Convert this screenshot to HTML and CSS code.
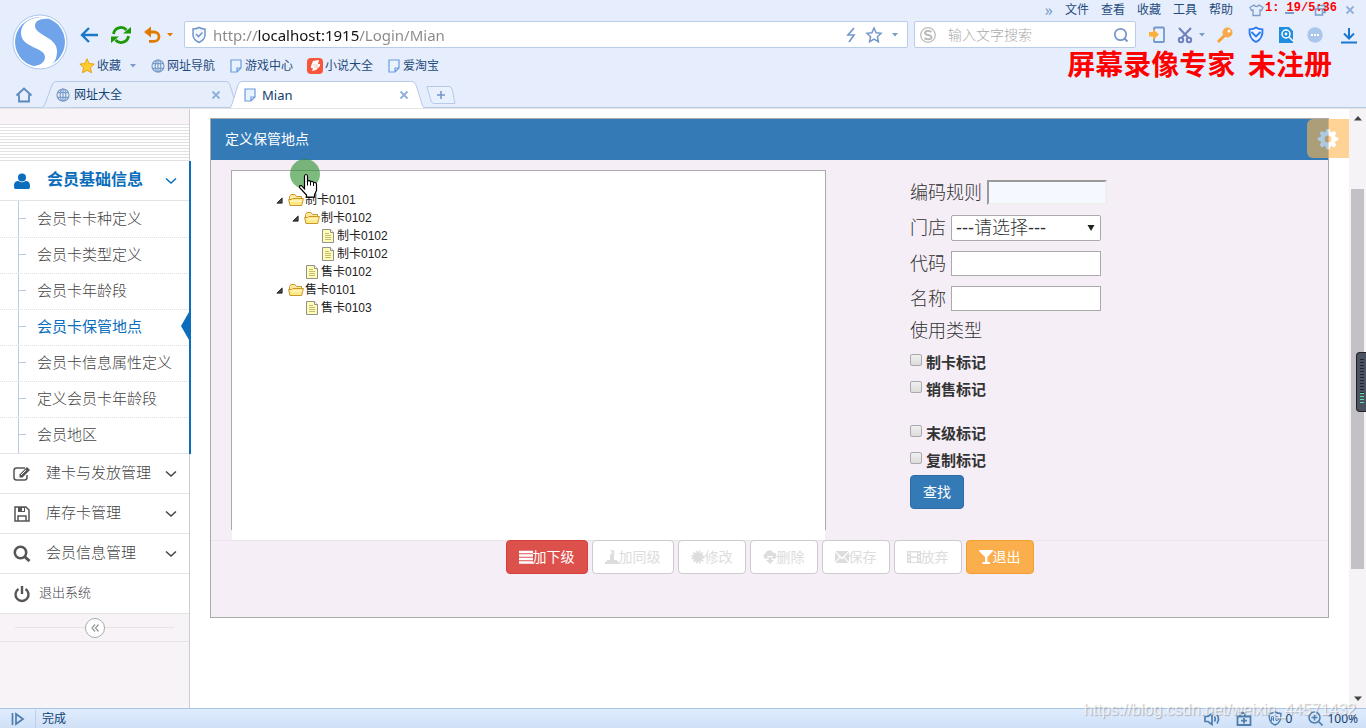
FILE: index.html
```html
<!DOCTYPE html>
<html lang="zh-CN">
<head>
<meta charset="utf-8">
<title>Mian</title>
<link rel="stylesheet" href="styles.css">
</head>
<body>
<svg class="defs" aria-hidden="true">
  <symbol id="globe" viewBox="0 0 14 14"><g fill="none" stroke="#7b9cc8" stroke-width="1.2"><circle cx="7" cy="7" r="6"/><ellipse cx="7" cy="7" rx="2.8" ry="6"/><path d="M7 1v12M1.6 4.6h10.8M1.6 9.4h10.8"/></g></symbol>
  <symbol id="page" viewBox="0 0 14 14"><path d="M2 1h10v8l-4 4H2zM12 9H8v4" fill="#e9f2ff" stroke="#6d9bdc" stroke-width="1.2"/></symbol>
  <symbol id="close" viewBox="0 0 10 10"><path d="M1.500 1.500l7 7M8.500 1.500l-7 7" stroke="#8faedb" stroke-width="1.800"/></symbol>
  <symbol id="down" viewBox="0 0 8 6"><path d="M1 1h6L4 4.500z" fill="currentColor"/></symbol>
  <symbol id="chev" viewBox="0 0 12 8"><path d="M1 1.500l5 4.500 5-4.500" fill="none" stroke="currentColor" stroke-width="1.500"/></symbol>
  <symbol id="folder" viewBox="0 0 16 16"><path d="M1.500 12.500V4.500L3 2.500h4l1.500 2h5v3" fill="#ffe9a0" stroke="#c9972c"/><path d="M2 13.500L.6 7.500h3.200l1-1h10.600l-1.700 7z" fill="#ffe985" stroke="#c9972c"/><path d="M2.500 9h11.500" stroke="#fffbe0"/></symbol>
  <symbol id="leaf" viewBox="0 0 16 16"><path d="M2.500 1.500h8l3 3v10h-11z" fill="#fffcb8" stroke="#92928c"/><path d="M10.500 1.500v3h3" fill="#fff" stroke="#92928c"/><path d="M5 5.500h4M5 7.500h6M5 9.500h6M5 11.500h6" stroke="#b3ab62" stroke-width=".8"/></symbol>
  <symbol id="open" viewBox="0 0 8 8"><path d="M7 1v6H1z" fill="#444" stroke="#222"/></symbol>
</svg>

<header class="chrome">
  <div class="top">
    <svg class="logo" viewBox="0 0 56 56"><circle cx="28" cy="28" r="27" fill="#fff" stroke="#a9c6ee"/><circle cx="28" cy="28" r="25" fill="#6fa4ea"/><path d="M33 3C18 3 9 9 9 19c0 15 24 14 24 24 0 5-5 9-12 9l7 2c13 0 17-8 17-17 0-14-22-16-22-25 0-5 5-8 14-7z" fill="#fff"/></svg>
    <div class="bars">
      <nav class="menu">
        <span class="more">»</span>
        <a href="#">文件</a><a href="#">查看</a><a href="#">收藏</a><a href="#">工具</a><a href="#">帮助</a>
        <div class="window">
          <svg width="15" height="14" viewBox="0 0 15 14"><path d="M5 2L1 4.500 2.500 7.500 4 7v5.500h7V7l1.500.5L14 4.500 10 2C9 4 6 4 5 2z" fill="none" stroke="#7b9cc8" stroke-width="1.300"/></svg>
          <svg width="12" height="12" viewBox="0 0 12 12"><path d="M2 9h9" stroke="#7b9cc8" stroke-width="2"/></svg>
          <svg width="12" height="12" viewBox="0 0 12 12"><path d="M1.500 5h7v6h-7zM4 4.500v-3h7v7H9" fill="none" stroke="#7b9cc8" stroke-width="1.500"/></svg>
          <svg width="10" height="10"><use href="#close"/></svg>
          <span class="timer">1: 19/5:36</span>
        </div>
      </nav>
      <div class="address">
        <button class="ib" aria-label="后退"><svg width="20" height="18" viewBox="0 0 20 18"><path d="M10 2L3 9l7 7M3 9h16" fill="none" stroke="#1b77c9" stroke-width="2.400"/></svg></button>
        <button class="ib" aria-label="刷新"><svg width="22" height="20" viewBox="0 0 22 20"><path d="M3.500 9A7.500 7.500 0 0 1 16.500 5M18.500 11A7.500 7.500 0 0 1 5.500 15" fill="none" stroke="#1c9a06" stroke-width="2.800"/><path d="M13 8.500h8V2zM9 11.500H1V18z" fill="#1c9a06"/></svg></button>
        <button class="ib undo" aria-label="恢复"><svg width="19" height="18" viewBox="0 0 19 18"><path d="M3 6h8a5 4.700 0 0 1 0 9.400H6" fill="none" stroke="#e07b00" stroke-width="2.800"/><path d="M1 6l7-5.500v11z" fill="#e07b00"/></svg><svg width="8" height="6"><use href="#down"/></svg></button>
        <div class="field url">
          <svg width="16" height="18" viewBox="0 0 16 18"><path d="M8 1.500c2 1.200 4 1.500 6 1.500v6c0 4-3 6-6 7.500C5 15 2 13 2 9V3c2 0 4-.3 6-1.500z" fill="#f2f7ff" stroke="#7598ca" stroke-width="1.500"/><path d="M5 8l2.500 2.500L11.500 6.500" fill="none" stroke="#7598ca" stroke-width="1.600"/></svg>
          <input type="text" aria-label="地址" value="http://localhost:1915/Login/Mian">
          <svg width="12" height="18" viewBox="0 0 12 18"><path d="M9 2L3 9h6L4 16" fill="none" stroke="#7598ca" stroke-width="1.700"/></svg>
          <svg width="18" height="18" viewBox="0 0 18 18"><path d="M9 2l2.100 4.700 5 .6-3.700 3.400 1 5L9 13.200 4.600 15.700l1-5L1.900 7.300l5-.6z" fill="none" stroke="#7598ca" stroke-width="1.500"/></svg>
          <svg width="8" height="6" class="dd"><use href="#down"/></svg>
        </div>
        <div class="field search">
          <svg width="18" height="18" viewBox="0 0 18 18"><circle cx="9" cy="9" r="7.300" fill="none" stroke="#bbb" stroke-width="1.300"/><path d="M12.500 5.800C10 4.500 6 4.700 6 7c0 2.500 6.500 1.500 6.500 4.200 0 2.500-4.500 2.500-7 1" fill="none" stroke="#bbb" stroke-width="2"/></svg>
          <input type="text" aria-label="搜索" placeholder="输入文字搜索">
          <svg width="16" height="16" viewBox="0 0 16 16"><circle cx="7.500" cy="7.500" r="5.700" fill="none" stroke="#7598ca" stroke-width="1.700"/><path d="M11 11l3.500 3.500" stroke="#7598ca" stroke-width="2"/></svg>
        </div>
        <div class="tools">
          <svg width="18" height="18" viewBox="0 0 18 18"><rect x="6" y="1.500" width="10" height="14.500" rx="1" fill="#e9f2ff" stroke="#7598ca" stroke-width="1.800"/><path d="M1 6h4V3l6 5.500L5 14v-3.500H1z" fill="#fbb03b"/></svg>
          <span class="pair"><svg width="16" height="18" viewBox="0 0 16 18"><g fill="none" stroke="#7080bd" stroke-width="2"><path d="M2 2l9.500 10M14 2L4.500 12"/><circle cx="4" cy="14" r="2.200"/><circle cx="12" cy="14" r="2.200"/></g></svg><svg width="8" height="6" class="dd"><use href="#down"/></svg></span>
          <svg width="18" height="18" viewBox="0 0 18 18"><path d="M9 9l-7 7" stroke="#f6a13a" stroke-width="3"/><circle cx="11.500" cy="6.500" r="5" fill="#f9a94b"/><circle cx="13" cy="5" r="1.500" fill="#fff"/></svg>
          <svg width="18" height="18" viewBox="0 0 18 18"><path d="M9 1.500c2 1.500 4 1.800 6.500 1.800C16 9 14 13.500 9 16 4 13.500 2 9 2.500 3.300 5 3.300 7 3 9 1.500z" fill="#eef4ff" stroke="#2b78f0" stroke-width="1.800"/><path d="M4.500 6L9 10.500 13.500 6" fill="none" stroke="#2b78f0" stroke-width="1.800"/></svg>
          <svg width="16" height="18" viewBox="0 0 16 18"><path d="M1 1h10l4 4v12H1z" fill="#1e8fe0"/><circle cx="8" cy="8" r="4" fill="none" stroke="#fff" stroke-width="1.500"/><circle cx="8" cy="8" r="1.400" fill="#fff"/><path d="M11 11l4 4" stroke="#fff" stroke-width="1.500"/></svg>
          <svg width="16" height="16" viewBox="0 0 16 16"><circle cx="8" cy="8" r="7.700" fill="#abc6eb"/><path d="M4 7h2v2H4zM7 7h2v2H7zM10 7h2v2h-2z" fill="#fff"/></svg>
          <svg width="18" height="18" viewBox="0 0 18 18"><path d="M9 2v10M4 7.500l5 5 5-5M1 16.500h16" fill="none" stroke="#1b77c9" stroke-width="2"/></svg>
        </div>
      </div>
      <div class="marks">
        <a href="#"><svg width="16" height="16" viewBox="0 0 16 16"><path d="M8 .8l2.200 4.700 5 .6-3.700 3.500 1 5.200L8 12.300l-4.500 2.500 1-5.200L.8 6.100l5-.6z" fill="#ffcb2e" stroke="#e5a31a"/></svg>收藏<svg width="8" height="6" class="dd"><use href="#down"/></svg></a>
        <a href="#"><svg width="14" height="14"><use href="#globe"/></svg>网址导航</a>
        <a href="#"><svg width="14" height="14"><use href="#page"/></svg>游戏中心</a>
        <a href="#" class="novel"><svg width="16" height="16" viewBox="0 0 16 16"><rect width="16" height="16" rx="4" fill="#f8563c"/><path d="M6 3l6-1-1 4h2v2l-4 4-4 1 1-3H4V8z" fill="#fff"/><path d="M6 7h5M7 9h4" stroke="#f8b0a4" stroke-width=".8"/></svg>小说大全</a>
        <a href="#"><svg width="14" height="14"><use href="#page"/></svg>爱淘宝</a>
      </div>
      <strong class="notice">屏幕录像专家&nbsp;&nbsp;未注册</strong>
    </div>
  </div>
  <div class="tabs">
    <svg class="home" width="18" height="16" viewBox="0 0 18 16"><path d="M1.500 8.500L9 1.500l7.500 7M4 7.500v7h10v-7" fill="none" stroke="#5c88c0" stroke-width="1.800"/></svg>
    <div class="tab">
      <svg class="shape" viewBox="0 0 194 27" preserveAspectRatio="none"><path d="M0 26.500Q2 26 3 23L10 4Q11 .5 14 .5H184Q187 .5 188 4L194 24" fill="#e6eefc" stroke="#b4cae8"/></svg>
      <svg width="14" height="14"><use href="#globe"/></svg><span>网址大全</span><button aria-label="关闭"><svg width="10" height="10"><use href="#close"/></svg></button>
    </div>
    <div class="tab on">
      <svg class="shape" viewBox="0 0 194 27" preserveAspectRatio="none"><path d="M0 27Q1 26 2 23L8 4Q9 .5 12 .5H182Q185 .5 186 4L192 23Q193 26 194 27" fill="#fff" stroke="#b4cae8"/></svg>
      <svg width="14" height="14"><use href="#page"/></svg><span>Mian</span><button aria-label="关闭"><svg width="10" height="10"><use href="#close"/></svg></button>
    </div>
    <button class="plus" aria-label="新标签"><svg width="30" height="18" viewBox="0 0 30 18"><path d="M1 .5h22q2 0 3 2.500l3 14.500H8Q6 17.500 5 15z" fill="#e9f1ff" stroke="#b4cae8"/><path d="M15 5v8M11 9h8" stroke="#7598ca" stroke-width="1.600"/></svg></button>
  </div>
</header>

<div class="view">
  <aside class="side">
    <div class="stripes"></div>
    <section class="group">
      <a class="item head" href="#"><svg width="16" height="16" viewBox="0 0 16 16"><circle cx="8" cy="4.500" r="4" fill="#0a6ebd"/><path d="M1 16q-1 0-1-3c0-4 2-5 4.500-5 2 1.600 5 1.600 7 0C14 8 16 9 16 13q0 3-1 3z" fill="#0a6ebd"/></svg><span>会员基础信息</span><svg width="12" height="8"><use href="#chev"/></svg></a>
      <ul class="sub">
        <li><a href="#">会员卡卡种定义</a></li>
        <li><a href="#">会员卡类型定义</a></li>
        <li><a href="#">会员卡年龄段</a></li>
        <li class="cur"><a href="#">会员卡保管地点</a></li>
        <li><a href="#">会员卡信息属性定义</a></li>
        <li><a href="#">定义会员卡年龄段</a></li>
        <li><a href="#">会员地区</a></li>
      </ul>
    </section>
    <a class="item" href="#"><svg width="18" height="16" viewBox="0 0 18 16"><path d="M12 2H3.500Q1 2 1 4.500v7Q1 14 3.500 14h8q2.500 0 2.500-2.500V9" fill="none" stroke="#555" stroke-width="1.500"/><path d="M6.500 11.500V8.500L14 1l3 3-7.500 7.500z" fill="#555"/><path d="M8 9l5-5" stroke="#fff"/></svg><span>建卡与发放管理</span><svg width="12" height="8"><use href="#chev"/></svg></a>
    <a class="item" href="#"><svg width="18" height="16" viewBox="0 0 18 16"><path d="M2 1h11l3 3v11H2z" fill="none" stroke="#555" stroke-width="1.500"/><path d="M5 15v-5h8v5" fill="none" stroke="#555" stroke-width="1.500"/><path d="M5 1h7v5H5z" fill="#555"/><path d="M9 2h2v3H9z" fill="#fff"/></svg><span>库存卡管理</span><svg width="12" height="8"><use href="#chev"/></svg></a>
    <a class="item" href="#"><svg width="18" height="17" viewBox="0 0 18 17"><circle cx="7.500" cy="7.500" r="5.700" fill="none" stroke="#555" stroke-width="2.500"/><path d="M11.500 11.500l5 4.500" stroke="#555" stroke-width="3"/></svg><span>会员信息管理</span><svg width="12" height="8"><use href="#chev"/></svg></a>
    <a class="item exit" href="#"><svg width="18" height="18" viewBox="0 0 18 18"><path d="M5.500 4A6.500 6.500 0 1 0 12.500 4" fill="none" stroke="#555" stroke-width="2.400"/><path d="M9 1v8" stroke="#555" stroke-width="2.400"/></svg><span>退出系统</span></a>
    <div class="fold"><button aria-label="收起"><svg width="8" height="8" viewBox="0 0 8 8"><path d="M4 .5L1 4l3 3.500M7.500.5l-3 3.500 3 3.500" fill="none" stroke="#999" stroke-width="1.300"/></svg></button></div>
  </aside>

  <main class="main">
    <section class="panel">
      <h1>定义保管地点</h1>
      <div class="body">
        <div class="treewrap">
          <ul class="tree">
            <li><div><i><svg width="7" height="7"><use href="#open"/></svg></i><svg width="16" height="16"><use href="#folder"/></svg>制卡0101</div>
              <ul>
                <li><div><i><svg width="7" height="7"><use href="#open"/></svg></i><svg width="16" height="16"><use href="#folder"/></svg>制卡0102</div>
                  <ul>
                    <li><div><i></i><svg width="16" height="16"><use href="#leaf"/></svg>制卡0102</div></li>
                    <li><div><i></i><svg width="16" height="16"><use href="#leaf"/></svg>制卡0102</div></li>
                  </ul>
                </li>
                <li><div><i></i><svg width="16" height="16"><use href="#leaf"/></svg>售卡0102</div></li>
              </ul>
            </li>
            <li><div><i><svg width="7" height="7"><use href="#open"/></svg></i><svg width="16" height="16"><use href="#folder"/></svg>售卡0101</div>
              <ul>
                <li><div><i></i><svg width="16" height="16"><use href="#leaf"/></svg>售卡0103</div></li>
              </ul>
            </li>
          </ul>
        </div>
        <form class="form">
          <div class="row"><label for="rule">编码规则</label><input id="rule" class="rule" type="text"></div>
          <div class="row"><label for="shop">门店</label><span class="pick"><select id="shop"><option>---请选择---</option></select><svg width="8" height="8" viewBox="0 0 8 8"><path d="M.5 1h7L4 7z" fill="#222"/></svg></span></div>
          <div class="row"><label for="code">代码</label><input id="code" type="text"></div>
          <div class="row"><label for="name">名称</label><input id="name" type="text"></div>
          <p>使用类型</p>
          <div class="checks">
            <label><input type="checkbox">制卡标记</label>
            <label><input type="checkbox">销售标记</label>
          </div>
          <div class="checks">
            <label><input type="checkbox">末级标记</label>
            <label><input type="checkbox">复制标记</label>
          </div>
          <button class="btn primary" type="button">查找</button>
        </form>
      </div>
      <div class="actions">
        <button class="btn danger"><svg width="14" height="14" viewBox="0 0 14 14"><path d="M0 2h14M0 5.500h14M0 9h14M0 12.500h14" stroke="currentColor" stroke-width="2.300"/></svg>加下级</button>
        <button class="btn" disabled><svg width="14" height="14" viewBox="0 0 14 14"><path d="M5 0h3.500L9.500 2 8.500 4.500H9.500L9 6v4h3v1.500h2V14H0v-2.500h2V10h3V6l-.5-1.500H6L7 2z" fill="currentColor"/></svg>加同级</button>
        <button class="btn" disabled><svg width="14" height="14" viewBox="0 0 14 14"><circle cx="7" cy="7" r="4.800" fill="currentColor"/><circle cx="7" cy="7" r="5.500" fill="none" stroke="currentColor" stroke-width="2.200" stroke-dasharray="1.700 1.180"/></svg>修改</button>
        <button class="btn" disabled><svg width="14" height="14" viewBox="0 0 14 14"><path d="M3 9a3 3 0 0 1-.5-5.800A4 4 0 0 1 10 2.500 3.300 3.300 0 0 1 11 9H9.500V6h-5v3z" fill="currentColor"/><path d="M5.500 7h3v3H11l-4 4-4-4h2.500z" fill="currentColor"/></svg>删除</button>
        <button class="btn" disabled><svg width="14" height="14" viewBox="0 0 14 14"><path d="M.5 1h13L7 7.500zM0 2l4.500 5L0 12zM14 2v10L9.500 7zM5.300 7.800L7 9.500l1.700-1.700L13.500 13H.5z" fill="currentColor"/></svg>保存</button>
        <button class="btn" disabled><svg width="14" height="14" viewBox="0 0 14 14"><path d="M0 1h14v12H0zM1.200 2.500v1.500h1.500V2.500zm0 3.500v1.500h1.500V6zm0 3.500V11h1.500V9.500zM4 2.500v4h6v-4zM4 8v4h6V8zm7.300-5.500v1.500h1.500V2.500zm0 3.500v1.500h1.500V6zm0 3.500V11h1.500V9.500z" fill="currentColor" fill-rule="evenodd"/></svg>放弃</button>
        <button class="btn warn"><svg width="14" height="14" viewBox="0 0 14 14"><path d="M0 0h14v1L8.500 7v5h2.500v2H3.500v-2H6V7L0 1z" fill="currentColor"/></svg>退出</button>
      </div>
    </section>
    <button class="gear" aria-label="设置"><svg width="22" height="22" viewBox="0 0 22 22"><g fill="currentColor" fill-rule="evenodd"><path d="M9.300 1h3.400l.5 2.700 1.600.7 2.300-1.600 2.400 2.400-1.600 2.300.7 1.600 2.600.5v3l-2.600.5-.7 1.600 1.600 2.400-2.400 2.400-2.300-1.600-1.600.7-.5 2.600H9.300l-.5-2.600-1.600-.7-2.300 1.600-2.400-2.400 1.600-2.400-.7-1.600L.8 12.600v-3l2.600-.5.7-1.600-1.600-2.300 2.400-2.400 2.300 1.600 1.600-.7zM11 7.500a3.500 3.500 0 1 0 0 7 3.500 3.500 0 0 0 0-7z"/></g></svg></button>
    <svg class="pointer" width="30" height="40" viewBox="0 0 30 40"><circle cx="15" cy="15" r="15" fill="#258c28" fill-opacity=".6"/><path d="M14.500 17.500q0-2 1.500-2t1.500 2V22q2.500-1 3 .8 2.500-1 3 .8 3-.5 3 2v6l-2 4v2.500h-8v-2L9.500 28.500q-.5-2.500 2-1.800l3 3z" fill="#fff" stroke="#000" stroke-width="1.200"/><path d="M17.500 22v4.500M20.500 23v3.500M23.500 24v3" stroke="#000"/></svg>
  </main>

  <div class="scroll">
    <svg width="8" height="5" viewBox="0 0 8 5"><path d="M4 0l4 4.500H0z" fill="#444"/></svg>
    <div class="track"><div class="thumb"></div></div>
    <svg width="8" height="5" viewBox="0 0 8 5"><path d="M0 .5h8L4 5z" fill="#444"/></svg>
    <div class="meter"></div>
  </div>
</div>

<footer class="status">
  <svg width="14" height="14" viewBox="0 0 14 14"><path d="M1.500 1v12M5 2v10l7-5z" fill="none" stroke="#4f7ead" stroke-width="1.700"/></svg>
  <span class="done">完成</span>
  <svg width="16" height="14" viewBox="0 0 16 14"><path d="M1 4.500h3l4-3v11l-4-3H1zM10.500 4.500q1.500 2.500 0 5M13 2.500q3 4.500 0 9" fill="none" stroke="#4f7ead" stroke-width="1.700"/></svg>
  <svg width="16" height="14" viewBox="0 0 16 14"><path d="M1.500 4.500h13v8.500h-13zM4 4V1h5v3M8 6v5.500M5 8.700h6" fill="none" stroke="#4f7ead" stroke-width="1.800"/></svg>
  <span><svg width="14" height="15" viewBox="0 0 14 15"><path d="M7 1q3 1.500 6 1.500c0 6-1 9.500-6 11.500C2 12 1 8.500 1 2.500 4 2.500 5 2 7 1z" fill="none" stroke="#4f7ead" stroke-width="1.400"/><path d="M3.500 10V6l1-1 1 1v4M3.500 8h2M8 5.500v4h1l1.500-1V6.500L9 5.500z" fill="none" stroke="#4f7ead"/></svg>0</span>
  <span><svg width="15" height="15" viewBox="0 0 15 15"><circle cx="6.500" cy="6.500" r="5.500" fill="none" stroke="#4f7ead" stroke-width="1.500"/><path d="M6.500 3.500v6M3.500 6.500h6M10.500 10.500l4 4" stroke="#4f7ead" stroke-width="1.600"/></svg>100%</span>
  <em class="mark">https://blog.csdn.net/weixin_44571432</em>
</footer>
</body>
</html>
```
FILE: styles.css
```css
* { box-sizing: border-box; }
body {
  margin: 0;
  min-height: 100vh;
  display: flex;
  flex-direction: column;
  background: #fff;
  font: 300 12px/18px "Liberation Sans", "Noto Sans CJK SC", sans-serif;
  color: #333;
}
a { color: inherit; text-decoration: none; }
ul { list-style: none; margin: 0; padding: 0; }
svg { flex: none; }
button { font: inherit; border: 0; padding: 0; background: none; }
.defs { position: absolute; width: 0; height: 0; }

/* browser frame */
.chrome { background: #e6eefd; font-family: "Noto Sans", "Noto Sans CJK SC", sans-serif; font-weight: 400; color: #1f4b7c; }
.top { display: flex; }
.logo { width: 56px; height: 56px; margin: 14px 10px 0 12px; }
.bars { flex: 1; position: relative; min-width: 0; }
.menu { height: 20px; display: flex; align-items: center; justify-content: flex-end; gap: 12px; padding-right: 11px; }
.more { font-size: 16px; color: #7b9cc8; }
.window { position: relative; display: flex; align-items: center; gap: 19px; margin-left: 4px; }
.timer { position: absolute; left: 16px; top: -3px; font: bold 12px/16px "Liberation Mono", monospace; color: #f00; white-space: pre; }
.address { display: flex; align-items: center; height: 29px; }
.ib { display: flex; align-items: center; margin-right: 11px; }
.ib:first-child { margin-left: 1px; }
.undo { gap: 4px; color: #e07b00; margin-right: 10px; }
.dd { color: #7b9cc8; }
.field { display: flex; align-items: center; height: 27px; border: 1px solid #b9cce8; background: #fff; padding: 0 6px; border-radius: 2px; }
.field input { flex: 1; min-width: 0; border: 0; outline: 0; background: none; padding: 0 6px; height: 24px; font: 14px "Noto Sans", "Noto Sans CJK SC", sans-serif; }
.url { flex: 1; gap: 8px; padding-right: 8px; }
.url input {
  margin-left: -8px;
  font-size: 15px;
  background: linear-gradient(90deg, #888 0 50px, #111 50px 152px, #888 152px);
  -webkit-background-clip: text;
  background-clip: text;
  color: transparent;
}
.search { width: 222px; margin-left: 6px; padding: 0 6px 0 4px; }
.search input { padding-left: 11px; font-weight: 300; }
.search input::placeholder { color: #aaa; opacity: 1; }
.tools { display: flex; align-items: center; gap: 13px; margin: 0 8px 0 12px; }
.tools > :last-child { margin-left: 4px; }
.pair { display: flex; align-items: center; gap: 5px; margin: 0 -3px 0 -2px; }
.marks { display: flex; align-items: center; gap: 14px; height: 33px; padding-left: 1px; }
.marks a { display: flex; align-items: center; gap: 2px; }
.marks .dd { margin-left: 6px; }
.notice { position: absolute; right: 34px; top: 43px; font: bold 28px/40px "Noto Sans CJK SC", sans-serif; color: #f00; white-space: nowrap; }
.tabs { display: flex; align-items: center; height: 26px; border-bottom: 1px solid #b4cae8; padding-left: 15px; }
.home { margin-right: 9px; }
.tab { position: relative; width: 194px; height: 27px; display: flex; align-items: center; gap: 4px; padding: 0 15px 0 14px; color: #11416f; margin-right: -6px; }
.tab > * { position: relative; }
.tab .shape { position: absolute; inset: 0; width: 100%; height: 100%; }
.tab span { flex: 1; }
.tab button { display: flex; }
.on { z-index: 1; font-size: 13px; padding-left: 13px; gap: 5px; }
.plus { display: flex; margin-left: 8px; }

/* page area */
.view { flex: 1; display: flex; border-top: 1px solid #e4e4e4; }
.side { width: 190px; flex: none; background: #f7f3f7; border-right: 1px solid #ccc; font-size: 15px; color: #444; }
.stripes { height: 37px; margin-top: 15px; background: repeating-linear-gradient(#e3e0e3 0 1px, #fff 1px 3px); }
.group { position: relative; }
.group::after { content: ""; position: absolute; top: 0; bottom: 0; right: -2px; width: 2px; background: #0a6ebd; }
.item { display: flex; align-items: center; height: 40px; padding: 0 12px 0 13px; gap: 15px; background: #fff; border-bottom: 1px solid #e4e4e4; }
.item span { flex: 1; padding-bottom: 2px; white-space: nowrap; min-width: 0; }
.head { font-weight: bold; font-size: 16px; color: #0a6ebd; padding-left: 14px; gap: 17px; }
.exit { font-size: 13px; gap: 8px; }
.sub { background: #fff; border-bottom: 1px solid #e4e4e4; padding-left: 18px; }
.sub li { position: relative; height: 36px; border-left: 1px solid #b8cce4; }
.sub li + li::after { content: ""; position: absolute; left: -19px; right: 0; top: 0; border-top: 1px dotted #ddd; }
.sub li::before { content: ""; position: absolute; left: 0; top: 17px; width: 7px; border-top: 1px solid #b8cce4; }
.sub a { display: block; padding-left: 18px; line-height: 35px; }
.cur { color: #0a6ebd; font-weight: 400; }
.cur a::after { content: ""; position: absolute; right: 0; top: 3px; border: solid transparent; border-width: 14px 8px 14px 0; border-right-color: #0a6ebd; }
.fold { height: 28px; display: flex; align-items: center; border-bottom: 1px solid #e4e4e4; padding: 0 15px; }
.fold::before, .fold::after { content: ""; flex: 1; border-top: 1px solid #e4e4e4; }
.fold button { width: 20px; height: 20px; border: 1px solid #aaa; border-radius: 50%; background: #fff; display: flex; align-items: center; justify-content: center; }

.main { flex: 1; position: relative; padding: 9px 20px; min-width: 0; }
.panel { border: 1px solid #aaa; background: #f5eef7; }
.panel h1 { margin: 0; padding: 10px 14px; font-size: 14px; line-height: 21px; font-weight: 400; color: #fff; background: #337ab7; }
.body { display: grid; grid-template-columns: 615fr 502fr; padding-top: 10px; border-bottom: 1px solid #eae4ec; }
.treewrap { margin-left: 20px; padding-bottom: 10px; background: linear-gradient(#fff, #fff) 1px 0 / calc(100% - 2px) 100% no-repeat; }
.tree { height: 360px; border: solid #aaa; border-width: 1px 1px 0; padding: 20px 0 0 40px; color: #222; font-weight: 400; }
.tree ul { padding-left: 16px; }
.tree div { display: flex; align-items: center; height: 18px; }
.tree i { width: 16px; display: flex; padding-left: 4px; }
.tree div > svg { margin-right: 1px; }

.form { padding: 10px 0 0 84px; color: #333; }
.row { display: flex; align-items: center; gap: 6px; min-height: 25px; margin-bottom: 10px; font-size: 18px; }
.row input { width: 150px; height: 25px; border: 1px solid #aaa; background: #fff; padding: 0 4px; }
.row .rule { width: 120px; border: 2px inset #eee; background: #f5f9ff; }
.row label { white-space: nowrap; font-size: 18px; margin-right: -1px; }
.pick { position: relative; display: flex; }
.pick svg { position: absolute; right: 6px; top: 9px; pointer-events: none; }
select { appearance: none; width: 150px; height: 26px; border: 1px solid #aaa; border-radius: 2px; background: #fff; padding: 0 4px; font: 300 18px "Liberation Sans", "Noto Sans CJK SC", sans-serif; color: #333; }
.form p { margin: -3px 0 4px; font-size: 18px; line-height: 27px; }
.checks { margin-bottom: 17px; }
.checks label { display: flex; align-items: center; gap: 4px; height: 27px; font-size: 15px; font-weight: bold; color: #333; }
.checks input { appearance: none; width: 12px; height: 12px; margin: 0 0 5px; border: 1px solid #aaa; border-radius: 2px; background: linear-gradient(#f0f0f0, #dcdcdc); }
.checks + .checks { margin-bottom: 1px; }
.btn { display: flex; align-items: center; justify-content: center; height: 34px; padding: 0 12px; border: 1px solid #ccc; border-radius: 4px; background: #fff; font-size: 14px; font-weight: 400; color: #ddd; }
.primary { background: #337ab7; border-color: #2e6da4; color: #fff; }
.danger { background: #dd514c; border-color: #d43f3a; color: #fff; }
.warn { background: #faae4c; border-color: #f0a030; color: #fff; }
.actions { display: flex; justify-content: center; gap: 4px; margin-top: -1px; padding-bottom: 43px; }
.gear { position: absolute; right: 0; top: 10px; width: 42px; height: 39px; border-radius: 6px 0 0 6px; background: #ffb752; opacity: .6; color: #fff; display: flex; align-items: center; justify-content: center; }
.pointer { position: absolute; left: 100px; top: 50px; }

.scroll { position: relative; width: 17px; background: #f6f3f7; display: flex; flex-direction: column; align-items: center; padding: 7px 0; }
.track { flex: 1; width: 13px; margin: 8px 0; }
.thumb { height: 68%; margin-top: 60px; background: #c3c1c5; }
.meter { position: absolute; right: 0; top: 243px; width: 10px; height: 60px; border: 1px solid #222; border-right: 0; border-radius: 4px 0 0 4px; background: repeating-linear-gradient(#23262e 0 1px, transparent 1px 3px) 3px 6px / 4px 34px no-repeat, repeating-linear-gradient(#5fe0a8 0 1px, transparent 1px 3px) 3px 40px / 4px 12px no-repeat, #4b5262; }

.status { position: relative; height: 20px; display: flex; align-items: center; gap: 16px; padding: 0 8px 0 11px; border-top: 1px solid #a9c4e4; background: linear-gradient(#dfecff, #cfe0f6); color: #11416f; font-family: "Noto Sans", "Noto Sans CJK SC", sans-serif; font-weight: 400; }
.status span { display: flex; align-items: center; gap: 4px; }
.status .done { flex: 1; border-left: 1px solid #b9cfec; padding-left: 6px; margin-left: -6px; }
.mark { position: absolute; right: 10px; top: -9px; font: 16px/20px "Liberation Sans", sans-serif; color: rgba(255, 255, 255, .7); text-shadow: 1px 1px 1px rgba(120, 120, 120, .5); }
```
